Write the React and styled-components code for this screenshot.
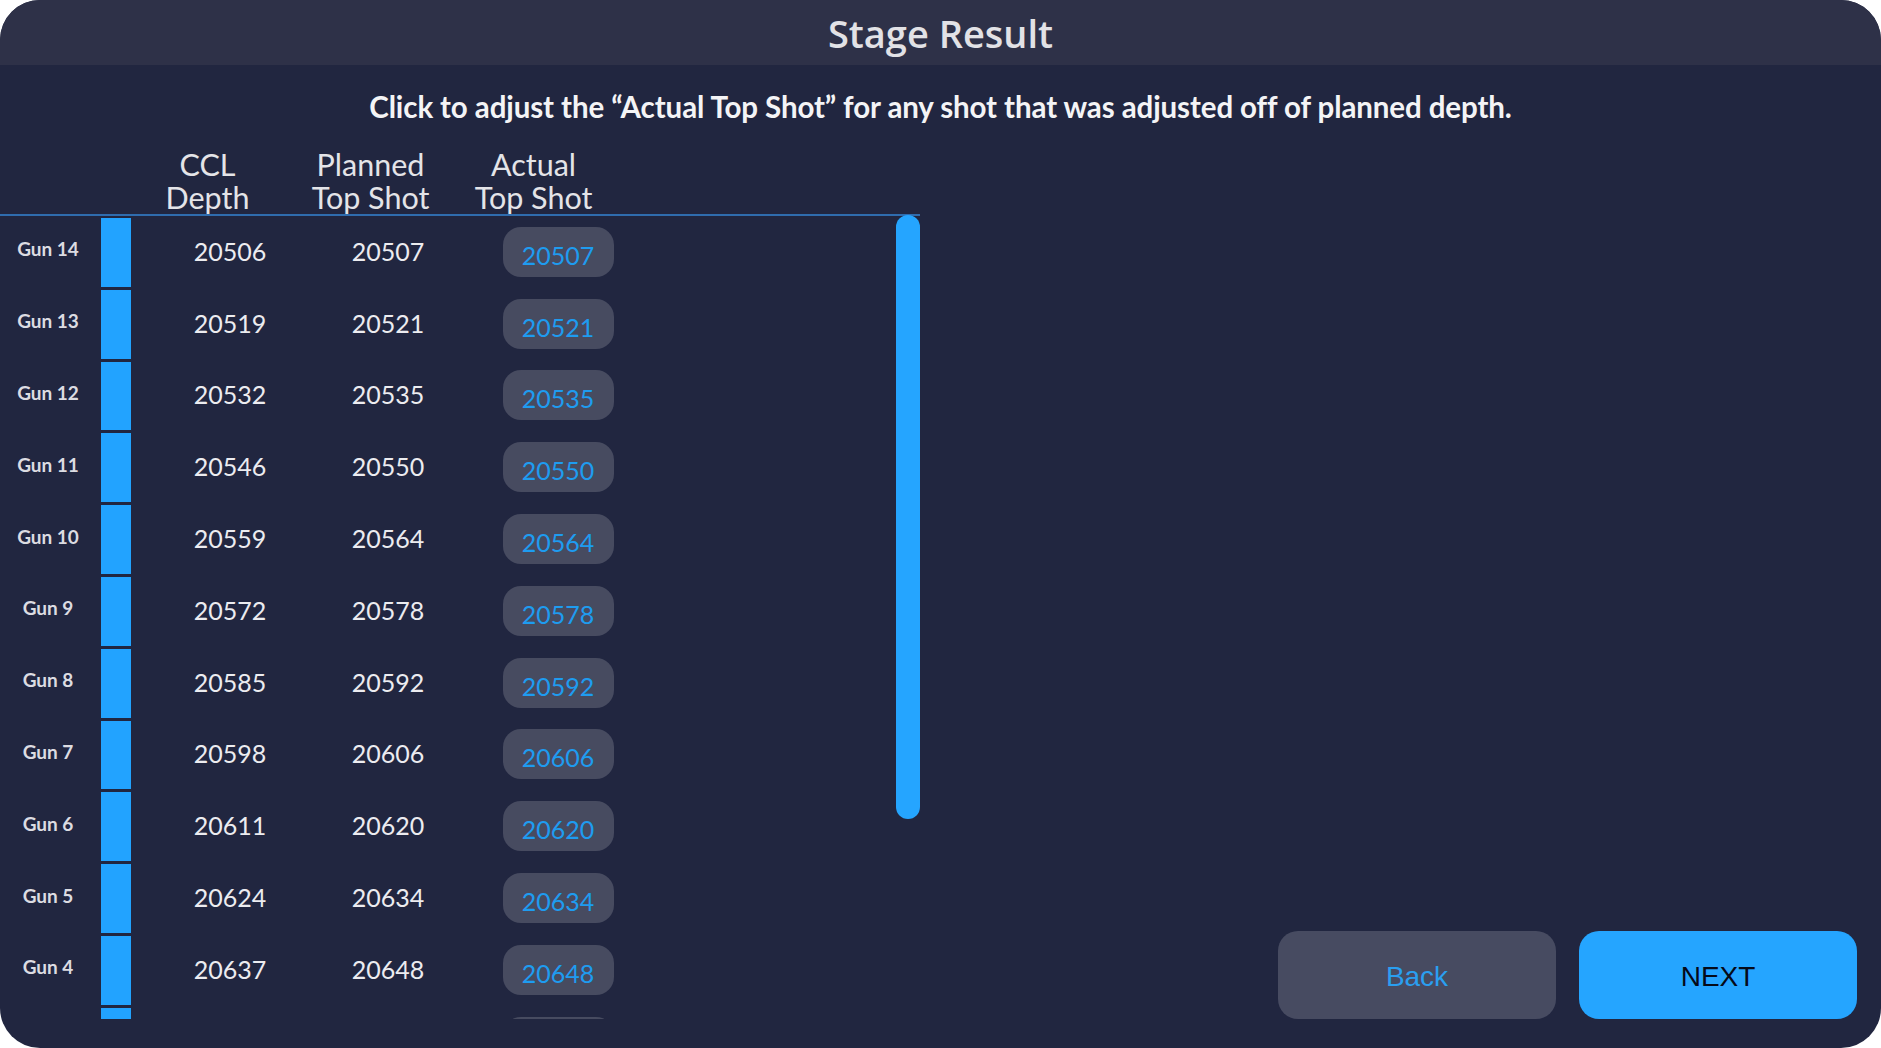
import styled, { createGlobalStyle } from 'styled-components';

const GlobalStyle = createGlobalStyle`
	html, body {
		margin: 0;
		padding: 0;
		background: #ffffff;
	}
	* {
		box-sizing: border-box;
	}
`;

const guns = [
	{ name: 'Gun 14', ccl: 20506, planned: 20507, actual: 20507 },
	{ name: 'Gun 13', ccl: 20519, planned: 20521, actual: 20521 },
	{ name: 'Gun 12', ccl: 20532, planned: 20535, actual: 20535 },
	{ name: 'Gun 11', ccl: 20546, planned: 20550, actual: 20550 },
	{ name: 'Gun 10', ccl: 20559, planned: 20564, actual: 20564 },
	{ name: 'Gun 9', ccl: 20572, planned: 20578, actual: 20578 },
	{ name: 'Gun 8', ccl: 20585, planned: 20592, actual: 20592 },
	{ name: 'Gun 7', ccl: 20598, planned: 20606, actual: 20606 },
	{ name: 'Gun 6', ccl: 20611, planned: 20620, actual: 20620 },
	{ name: 'Gun 5', ccl: 20624, planned: 20634, actual: 20634 },
	{ name: 'Gun 4', ccl: 20637, planned: 20648, actual: 20648 },
	{ name: 'Gun 3', ccl: 20650, planned: 20662, actual: 20662 },
	{ name: 'Gun 2', ccl: 20663, planned: 20676, actual: 20676 },
];

const App = () => {
	return (
		<Frame>
			<GlobalStyle />
			<TitleBar>Stage Result</TitleBar>
			<Instruction>
				Click to adjust the “Actual Top Shot” for any shot that was adjusted off of planned depth.
			</Instruction>
			<Main>
				<Table>
					<ColumnHeads>
						<ColumnHead>CCL<br />Depth</ColumnHead>
						<ColumnHead>Planned<br />Top Shot</ColumnHead>
						<ColumnHead>Actual<br />Top Shot</ColumnHead>
					</ColumnHeads>
					<TableBody>
						<List>
							{guns.map(gun => (
								<Row key={gun.name}>
									<GunName>{gun.name}</GunName>
									<Bar />
									<Value>{gun.ccl}</Value>
									<Value>{gun.planned}</Value>
									<PillCell>
										<ShotPill>{gun.actual}</ShotPill>
									</PillCell>
								</Row>
							))}
						</List>
						<ScrollTrack>
							<ScrollThumb />
						</ScrollTrack>
					</TableBody>
				</Table>
				<Actions>
					<BackButton>Back</BackButton>
					<NextButton>NEXT</NextButton>
				</Actions>
			</Main>
		</Frame>
	);
};

const Frame = styled.div`
	width: 100vw;
	height: 100vh;
	border-radius: 40px;
	overflow: hidden;
	background: #212640;
	display: flex;
	flex-direction: column;
	font-family: Lato, 'Open Sans', sans-serif;
`;

const TitleBar = styled.div`
	height: 65px;
	flex-shrink: 0;
	background: #2e3148;
	display: flex;
	align-items: center;
	justify-content: center;
	font-family: 'Open Sans', Lato, sans-serif;
	font-size: 38px;
	font-weight: 600;
	color: #e2e2e6;
`;

const Instruction = styled.div`
	margin-top: 25px;
	height: 34px;
	line-height: 34px;
	text-align: center;
	font-size: 29.5px;
	font-weight: 700;
	letter-spacing: -0.1px;
	color: #f4f4f6;
`;

const Main = styled.div`
	flex: 1;
	min-height: 0;
	display: flex;
	padding-bottom: 29px;
`;

const Table = styled.div`
	width: 920px;
	margin-top: 24px;
	display: flex;
	flex-direction: column;
`;

const ColumnHeads = styled.div`
	display: grid;
	grid-template-columns: repeat(3, 163px);
	padding-left: 126px;
	border-bottom: 2px solid #2f6cae;
`;

const ColumnHead = styled.div`
	text-align: center;
	font-size: 30.5px;
	line-height: 33px;
	color: #e4e4e8;
`;

const TableBody = styled.div`
	flex: 1;
	min-height: 0;
	display: flex;
`;

const List = styled.div`
	flex: 1;
	overflow: hidden;
`;

const Row = styled.div`
	display: grid;
	grid-template-columns: 101px 30px 198px 118px 222px;
	height: 71.8px;
	align-items: center;
`;

const GunName = styled.div`
	text-align: center;
	padding-right: 5px;
	font-size: 19px;
	font-weight: 700;
	color: #dcdce2;
	margin-top: -6px;
`;

const Bar = styled.div`
	align-self: stretch;
	margin: 2px 0 1px;
	background: #22a3ff;
`;

const Value = styled.div`
	text-align: center;
	font-size: 25px;
	color: #ececf0;
	margin-top: -2px;
`;

const PillCell = styled.div`
	display: flex;
	justify-content: center;
`;

const ShotPill = styled.div`
	width: 111px;
	height: 50px;
	border-radius: 18px;
	background: #474b60;
	display: flex;
	align-items: center;
	justify-content: center;
	padding-top: 6px;
	font-size: 25px;
	color: #1e9cf0;
	cursor: pointer;
`;

const ScrollTrack = styled.div`
	width: 24px;
	margin-top: -1px;
`;

const ScrollThumb = styled.div`
	width: 24px;
	height: 604px;
	border-radius: 12px;
	background: #25a5ff;
`;

const Actions = styled.div`
	flex: 1;
	display: flex;
	align-items: flex-end;
	justify-content: flex-end;
	gap: 23px;
	padding-right: 24px;
`;

const BaseButton = styled.button`
	width: 278px;
	height: 88px;
	border: none;
	border-radius: 20px;
	padding-top: 4px;
	font-family: 'Liberation Sans', Arial, sans-serif;
	font-size: 28px;
	cursor: pointer;
`;

const BackButton = styled(BaseButton)`
	background: #474b61;
	color: #2a9ff0;
`;

const NextButton = styled(BaseButton)`
	background: #25a5ff;
	color: #050a18;
`;

export default App;
